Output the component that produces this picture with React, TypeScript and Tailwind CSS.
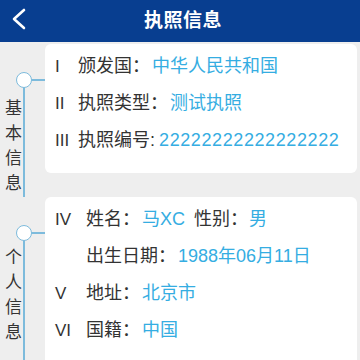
import React from "react";

type Row = {
    num: string;
    label: string;
    value: string;
    valueClass?: string;
    extra?: { label: string; value: string };
};

const basicRows: Row[] = [
    { num: "I", label: "颁发国：", value: "中华人民共和国" },
    { num: "II", label: "执照类型：", value: "测试执照" },
    { num: "III", label: "执照编号:", value: "22222222222222222", valueClass: "ml-[4px] tracking-[0.6px]" },
];

const personRows: Row[] = [
    { num: "IV", label: "姓名：", value: "马XC", extra: { label: "性别：", value: "男" } },
    { num: "", label: "出生日期：", value: "1988年06月11日" },
    { num: "V", label: "地址：", value: "北京市" },
    { num: "VI", label: "国籍：", value: "中国" },
];

function Section({
    title,
    rows,
    numWidth,
    height,
    labelTop,
}: {
    title: string;
    rows: Row[];
    numWidth: string;
    height: string;
    labelTop: string;
}) {
    return (
        <div className={`flex ${height}`}>
            {/* Timeline column */}
            <div className="relative w-[45px] shrink-0">
                <div className="absolute left-[23px] top-[36px] bottom-[-24px] w-[1.5px] bg-[#7dbbdc]" />
                <div className="absolute left-[31px] top-[35px] w-[14px] h-[1.5px] bg-[#7dbbdc]" />
                <div className="absolute left-[16px] top-[28px] w-[16px] h-[16px] rounded-full border-[1.5px] border-[#7dbbdc] bg-white" />
                <div className={`flex flex-col items-center w-[27px] ${labelTop} text-[17px] leading-[25px] text-[#333]`}>
                    {title.split("").map((c, i) => (
                        <span key={i}>{c}</span>
                    ))}
                </div>
            </div>

            {/* Card */}
            <div className="flex-1 mr-[3px] bg-white rounded-md pt-[4px] pl-[10px]">
                {rows.map((r, i) => (
                    <div key={i} className="flex items-center h-[37px] text-[18px] whitespace-nowrap">
                        <span className={`${numWidth} shrink-0 text-[17px] text-[#333]`}>{r.num}</span>
                        <span className="text-[#333]">{r.label}</span>
                        <span className={`${r.valueClass ?? "ml-[2px]"} text-[#35ade2]`}>{r.value}</span>
                        {r.extra && (
                            <>
                                <span className="ml-[9px] text-[#333]">{r.extra.label}</span>
                                <span className="ml-[1px] text-[#35ade2]">{r.extra.value}</span>
                            </>
                        )}
                    </div>
                ))}
            </div>
        </div>
    );
}

export default function App() {
    return (
        <div
            className="w-[360px] h-[360px] overflow-hidden bg-[#eeeeee]"
            style={{ fontFamily: '"Liberation Sans", "Noto Sans CJK SC", sans-serif' }}
        >
            {/* Header */}
            <div className="relative h-[42px] bg-[#083e90] flex items-center justify-center">
                <svg
                    className="absolute left-[10px] top-[8px]"
                    width="18"
                    height="22"
                    viewBox="0 0 18 22"
                    fill="none"
                >
                    <path d="M14 2 L4 11 L14 20" stroke="white" strokeWidth="2.6" strokeLinecap="round" strokeLinejoin="round" />
                </svg>
                <h1 className="text-[19px] font-bold text-white tracking-[0.5px] pl-[6px]">执照信息</h1>
            </div>

            <div className="flex flex-col gap-[24px] pt-[2px]">
                <Section title="基本信息" rows={basicRows} numWidth="w-[23px]" height="h-[129px]" labelTop="pt-[52px]" />
                <Section title="个人信息" rows={personRows} numWidth="w-[31px]" height="h-[170px]" labelTop="pt-[48px]" />
            </div>
        </div>
    );
}
